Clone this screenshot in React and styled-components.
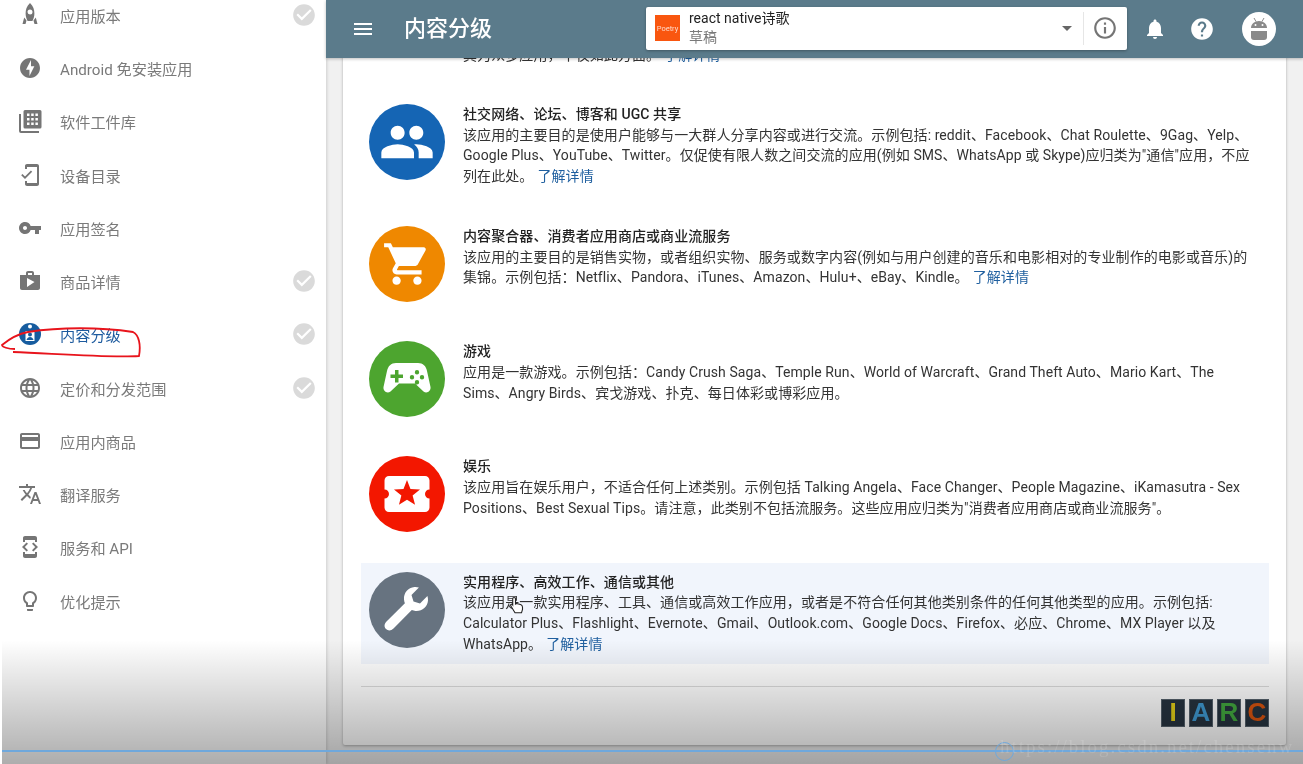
import React from "react";
import styled, { createGlobalStyle } from "styled-components";
import {
  MdOfflineBolt,
  MdVpnKey,
  MdShop,
  MdLanguage,
  MdCreditCard,
  MdTranslate,
  MdDeveloperMode,
  MdLightbulbOutline,
  MdCheckCircle,
  MdMenu,
  MdArrowDropDown,
  MdInfoOutline,
  MdNotifications,
  MdHelp,
  MdPeople,
  MdShoppingCart,
  MdLocalActivity,
  MdMobileFriendly,
} from "react-icons/md";

const GlobalStyle = createGlobalStyle`
  html, body {
    margin: 0;
    padding: 0;
    height: 100%;
    overflow: hidden;
    font-family: Roboto, "Noto Sans CJK SC", sans-serif;
  }
`;

const Page = styled.div`
  position: relative;
  display: flex;
  width: 1303px;
  height: 764px;
  overflow: hidden;
  background: #f1f1f1;
  filter: blur(0.35px);
`;

const Sidebar = styled.nav`
  width: 326px;
  flex: none;
  background: #fff;
  overflow: hidden;
  box-shadow: 1px 0 3px rgba(0, 0, 0, 0.15);
  z-index: 1;
`;

const NavList = styled.div`
  margin-top: -11.8px;
`;

const NavItem = styled.div`
  display: flex;
  align-items: center;
  height: 53.27px;
  padding: 0 9px 0 18px;
  color: ${props => (props.$active ? "#1c5a9e" : "#7a7a7a")};
  font-size: 15.2px;
`;

const NavIcon = styled.span`
  display: flex;
  justify-content: center;
  width: 24px;
  margin-right: 18px;
  font-size: 24px;
  color: ${props => (props.$active ? "#165c9f" : "#757575")};
`;

const NavLabel = styled.span`
  flex: 1;
`;

const Done = styled(MdCheckCircle)`
  font-size: 26px;
  color: #dadada;
`;

const Main = styled.div`
  flex: 1;
  display: flex;
  flex-direction: column;
  min-width: 0;
`;

const TopBar = styled.header`
  position: relative;
  z-index: 2;
  display: flex;
  align-items: center;
  flex: none;
  height: 58px;
  padding: 0 21px 0 25px;
  background: #5b7b8b;
  color: #fff;
  box-shadow: 0 1px 3px rgba(0, 0, 0, 0.25);
`;

const PageTitle = styled.h1`
  width: 242px;
  margin: 0 0 6px 29px;
  font-size: 22px;
  font-weight: 500;
`;

const AppPicker = styled.div`
  display: flex;
  align-items: center;
  flex: none;
  width: 481px;
  height: 43px;
  margin-top: -2px;
  padding: 0 9px 0 9px;
  box-sizing: border-box;
  background: #fff;
  border-radius: 2px;
  box-shadow: 0 1px 3px rgba(0, 0, 0, 0.3);
`;

const AppLogo = styled.div`
  display: flex;
  align-items: center;
  justify-content: center;
  width: 25px;
  height: 26px;
  background: #f9560f;
  color: #ffd9c9;
  font-size: 7.5px;
`;

const AppText = styled.div`
  flex: 1;
  margin-left: 9px;
`;

const AppName = styled.div`
  color: #222;
  font-size: 14px;
  line-height: 19px;
`;

const AppStatus = styled.div`
  color: #7a7a7a;
  font-size: 14px;
  line-height: 19px;
`;

const PickerDivider = styled.div`
  width: 1px;
  height: 33px;
  margin: 0 8px 0 4px;
  background: #e6e6e6;
`;

const BarIcons = styled.div`
  display: flex;
  align-items: center;
  margin-left: 16px;
  gap: 22px;
`;

const Avatar = styled.div`
  display: flex;
  align-items: center;
  justify-content: center;
  flex: none;
  width: 34px;
  height: 34px;
  margin-left: 27px;
  border-radius: 50%;
  background: #fff;
`;

const Scroller = styled.div`
  flex: 1;
  overflow: hidden;
  padding: 0 17px;
`;

const Card = styled.section`
  height: 707px;
  margin-top: -20px;
  padding: 0 17px 0 18px;
  box-sizing: border-box;
  background: #fff;
  border-radius: 2px;
  box-shadow: 0 1px 3px rgba(0, 0, 0, 0.3);
`;

const CutOff = styled.div`
  height: 50px;
  padding: 7px 0 0 102px;
  overflow: hidden;
  color: #333;
  font-size: 14px;
  letter-spacing: 0.08px;
  line-height: 21px;
`;

const Rows = styled.div`
  display: flex;
  flex-direction: column;
  gap: 22.2px;
`;

const Row = styled.article`
  display: flex;
  padding: 9px 19px ${props => (props.$hover ? 10 : 8)}px 8px;
  background: ${props => (props.$hover ? "#f1f5fc" : "transparent")};
`;

const Badge = styled.div`
  display: flex;
  align-items: center;
  justify-content: center;
  flex: none;
  width: 76px;
  height: 76px;
  margin-right: 18px;
  border-radius: 50%;
  background: ${props => props.$color};
  color: #fff;
  font-size: ${props => props.$size || 50}px;
`;

const RowText = styled.div`
  color: #333;
  font-size: 14px;
  letter-spacing: 0.08px;
  line-height: 20.7px;
  white-space: nowrap;
`;

const RowTitle = styled.div`
  color: #222;
  font-weight: 500;
`;

const More = styled.a`
  margin-left: 4px;
  color: #1f5f9f;
`;

const Divider = styled.hr`
  height: 1px;
  margin: 21.5px 0 12px;
  border: 0;
  background: #dcdcdc;
`;

const Ratings = styled.div`
  display: flex;
  justify-content: flex-end;
  gap: 4px;
`;

const RatingTile = styled.div`
  display: flex;
  align-items: center;
  justify-content: center;
  width: 24px;
  height: 28px;
  box-sizing: border-box;
  border: 1px solid #55616b;
  background: #26333f;
  color: ${props => props.$color};
  font-family: "Liberation Sans", sans-serif;
  font-size: 26px;
  font-weight: 700;
`;

const Dim = styled.div`
  position: absolute;
  left: 2px;
  right: 0;
  top: 640px;
  bottom: 0;
  z-index: 3;
  pointer-events: none;
  background: linear-gradient(rgba(0, 0, 0, 0), rgba(0, 0, 0, 0.32));
`;

const ProgressLine = styled.div`
  position: absolute;
  left: 0;
  right: 0;
  top: 110px;
  height: 2px;
  background: #6fa8dc;
`;

const ProgressKnob = styled.div`
  position: absolute;
  left: 993px;
  top: 101.5px;
  width: 19px;
  height: 19px;
  box-sizing: border-box;
  border: 1.5px solid #6fa8dc;
  border-radius: 50%;
`;

const Watermark = styled.div`
  position: absolute;
  left: 998px;
  top: 96px;
  color: rgba(255, 255, 255, 0.14);
  font-family: "Liberation Serif", serif;
  font-size: 19px;
  letter-spacing: 2px;
  white-space: nowrap;
`;

const Scribble = styled.svg`
  position: absolute;
  left: 0;
  top: 320px;
  z-index: 3;
  pointer-events: none;
`;

const Pointer = styled.svg`
  position: absolute;
  left: 509px;
  top: 596px;
  z-index: 3;
  pointer-events: none;
`;

const Rocket = () => (
  <svg width="24" height="24" viewBox="0 0 24 24" fill="currentColor">
    <path d="M12 0C8.6 3 7.6 7 7.6 10.5c0 3 1 5.6 2 7.5h4.8c1-1.9 2-4.5 2-7.5C16.400 7 15.400 3 12 0zm0 6.500a2.500 2.500 0 1 1 0 5 2.500 2.500 0 0 1 0-5z" />
    <path d="M6.200 14.500 4.500 21h3l1-3.500zM17.800 14.500 19.500 21h-3l-1-3.500z" />
  </svg>
);

const Library = () => (
  <svg width="24" height="24" viewBox="0 0 24 24" fill="currentColor">
    <path d="M1 5h2v17h18v2H3a2 2 0 0 1-2-2z" />
    <path d="M7 1h15a1.500 1.500 0 0 1 1.500 1.500V18a1.500 1.500 0 0 1-1.500 1.500H7A1.500 1.500 0 0 1 5.500 18V2.500A1.500 1.500 0 0 1 7 1zm2 3.500v2.500h2.500V4.500zm4.200 0v2.500h2.500V4.500zm4.200 0v2.500h2.500V4.500zM9 9v2.500h2.500V9zm4.200 0v2.500h2.500V9zm4.200 0v2.500h2.500V9zM9 13.500V16h2.500v-2.500zm4.200 0V16h2.500v-2.500zm4.200 0V16h2.500v-2.500z" />
  </svg>
);

const RatingIcon = () => (
  <svg width="24" height="24" viewBox="0 0 24 24">
    <circle cx="12" cy="12" r="11" fill="currentColor" />
    <circle cx="12" cy="4.500" r="2" fill="#fff" />
    <path d="M7.500 9h9v10h-9z" fill="#fff" />
    <circle cx="12" cy="12.500" r="2" fill="currentColor" />
    <path d="M8.500 18c.5-2 2-3 3.500-3s3 1 3.500 3z" fill="currentColor" />
  </svg>
);

const GameIcon = () => (
  <svg width="52" height="52" viewBox="0 0 52 52" fill="currentColor">
    <path
      fillRule="evenodd"
      d="M15 10h22c5 0 8 3 9 8l3.500 16c.6 4-3.500 7-7 4.500L34 30.500H18L9.500 38.500C6 41 1.900 38 2.500 34L6 18c1-5 4-8 9-8zm-1 7v4.500H9.500v3.500H14v4.500h3.500V25H22v-3.500h-4.500V17zm22 0a2.200 2.200 0 1 0 0 4.400 2.200 2.200 0 0 0 0-4.400zm-5 5a2.200 2.200 0 1 0 0 4.400 2.200 2.200 0 0 0 0-4.400zm10 0a2.200 2.200 0 1 0 0 4.400 2.200 2.200 0 0 0 0-4.400zm-5 5a2.200 2.200 0 1 0 0 4.400 2.200 2.200 0 0 0 0-4.400z"
    />
  </svg>
);

const WrenchIcon = () => (
  <svg width="52" height="52" viewBox="0 0 52 52" fill="currentColor">
    <path d="M33.500 3C27 3.500 22.500 9 23 15.500c.1 1.400.4 2.500.9 3.700L5.500 37.500c-2.500 2.500-2.500 5.500-.5 7.500s5 2 7.500-.5l18.300-18.400c1.200.5 2.300.8 3.700.9C41 27.500 46.500 23 47 16.500c.1-1.600-.1-3-.6-4.400l-7.400 7.400-6.500-2-2-6.500 7.400-7.400C36.500 3.100 35.100 2.900 33.500 3z" />
  </svg>
);

const AndroidHead = () => (
  <svg width="22" height="24" viewBox="0 0 22 24">
    <path d="M6 1l2 3.500M16 1l-2 3.500" stroke="#8a8a8a" strokeWidth="1" />
    <path d="M3 11c0-4 3.500-7 8-7s8 3 8 7z" fill="#8a8a8a" />
    <circle cx="7.500" cy="8" r="1" fill="#fff" />
    <circle cx="14.500" cy="8" r="1" fill="#fff" />
    <path d="M3 14h16v6a3 3 0 0 1-3 3H6a3 3 0 0 1-3-3z" fill="#8a8a8a" />
  </svg>
);

const navItems = [
  { label: "应用版本", icon: <Rocket />, done: true },
  { label: "Android 免安装应用", icon: <MdOfflineBolt /> },
  { label: "软件工件库", icon: <Library /> },
  { label: "设备目录", icon: <MdMobileFriendly /> },
  { label: "应用签名", icon: <MdVpnKey /> },
  { label: "商品详情", icon: <MdShop />, done: true },
  { label: "内容分级", icon: <RatingIcon />, done: true, active: true },
  { label: "定价和分发范围", icon: <MdLanguage />, done: true },
  { label: "应用内商品", icon: <MdCreditCard /> },
  { label: "翻译服务", icon: <MdTranslate /> },
  { label: "服务和 API", icon: <MdDeveloperMode /> },
  { label: "优化提示", icon: <MdLightbulbOutline /> },
];

const categories = [
  {
    color: "#1565b4",
    icon: <MdPeople />,
    size: 56,
    title: "社交网络、论坛、博客和 UGC 共享",
    lines: [
      "该应用的主要目的是使用户能够与一大群人分享内容或进行交流。示例包括: reddit、Facebook、Chat Roulette、9Gag、Yelp、",
      "Google Plus、YouTube、Twitter。仅促使有限人数之间交流的应用(例如 SMS、WhatsApp 或 Skype)应归类为\"通信\"应用，不应",
      "列在此处。",
    ],
    more: true,
  },
  {
    color: "#ef8800",
    icon: <MdShoppingCart />,
    size: 50,
    title: "内容聚合器、消费者应用商店或商业流服务",
    lines: [
      "该应用的主要目的是销售实物，或者组织实物、服务或数字内容(例如与用户创建的音乐和电影相对的专业制作的电影或音乐)的",
      "集锦。示例包括：Netflix、Pandora、iTunes、Amazon、Hulu+、eBay、Kindle。",
    ],
    more: true,
  },
  {
    color: "#4da52f",
    icon: <GameIcon />,
    title: "游戏",
    lines: [
      "应用是一款游戏。示例包括：Candy Crush Saga、Temple Run、World of Warcraft、Grand Theft Auto、Mario Kart、The",
      "Sims、Angry Birds、宾戈游戏、扑克、每日体彩或博彩应用。",
    ],
  },
  {
    color: "#f31700",
    icon: <MdLocalActivity />,
    size: 54,
    title: "娱乐",
    lines: [
      "该应用旨在娱乐用户，不适合任何上述类别。示例包括 Talking Angela、Face Changer、People Magazine、iKamasutra - Sex",
      "Positions、Best Sexual Tips。请注意，此类别不包括流服务。这些应用应归类为\"消费者应用商店或商业流服务\"。",
    ],
  },
  {
    color: "#677380",
    icon: <WrenchIcon />,
    hover: true,
    title: "实用程序、高效工作、通信或其他",
    lines: [
      "该应用是一款实用程序、工具、通信或高效工作应用，或者是不符合任何其他类别条件的任何其他类型的应用。示例包括:",
      "Calculator Plus、Flashlight、Evernote、Gmail、Outlook.com、Google Docs、Firefox、必应、Chrome、MX Player 以及",
      "WhatsApp。",
    ],
    more: true,
  },
];

const tiles = [
  { letter: "I", color: "#e3cf18" },
  { letter: "A", color: "#3f9ad2" },
  { letter: "R", color: "#42a83f" },
  { letter: "C", color: "#d9540f" },
];

export default function App() {
  return (
    <Page>
      <GlobalStyle />
      <Sidebar>
        <NavList>
          {navItems.map(item => (
            <NavItem key={item.label} $active={item.active}>
              <NavIcon $active={item.active}>{item.icon}</NavIcon>
              <NavLabel>{item.label}</NavLabel>
              {item.done && <Done />}
            </NavItem>
          ))}
        </NavList>
      </Sidebar>
      <Main>
        <TopBar>
          <MdMenu size={24} />
          <PageTitle>内容分级</PageTitle>
          <AppPicker>
            <AppLogo>Poetry</AppLogo>
            <AppText>
              <AppName>react native诗歌</AppName>
              <AppStatus>草稿</AppStatus>
            </AppText>
            <MdArrowDropDown size={24} color="#666" />
            <PickerDivider />
            <MdInfoOutline size={26} color="#757575" />
          </AppPicker>
          <BarIcons>
            <MdNotifications size={24} />
            <MdHelp size={26} />
          </BarIcons>
          <Avatar>
            <AndroidHead />
          </Avatar>
        </TopBar>
        <Scroller>
          <Card>
            <CutOff>
              其为众多应用，不仅如此方面。<More>了解详情</More>
            </CutOff>
            <Rows>
              {categories.map(cat => (
                <Row key={cat.title} $hover={cat.hover}>
                  <Badge $color={cat.color} $size={cat.size}>
                    {cat.icon}
                  </Badge>
                  <RowText>
                    <RowTitle>{cat.title}</RowTitle>
                    {cat.lines.map((line, i) => (
                      <div key={i}>
                        {line}
                        {cat.more && i === cat.lines.length - 1 && <More>了解详情</More>}
                      </div>
                    ))}
                  </RowText>
                </Row>
              ))}
            </Rows>
            <Divider />
            <Ratings>
              {tiles.map(t => (
                <RatingTile key={t.letter} $color={t.color}>
                  {t.letter}
                </RatingTile>
              ))}
            </Ratings>
          </Card>
        </Scroller>
      </Main>
      <Scribble width="150" height="50" viewBox="0 320 150 50">
        <path
          d="M15 349 C8 349 2 347 2 345 C8 340 18 334 28 332 C60 327 100 327 133 332 C139 335 141 345 139 356 C110 358 60 354 13 352"
          fill="none"
          stroke="#e8141c"
          strokeWidth="1.8"
        />
      </Scribble>
      <Pointer width="17" height="19" viewBox="0 0 17 19">
        <path
          d="M5 1.500c1 0 1.500.7 1.500 1.500v5l1-.5 1 .2 1 .3 1 .3 1.500.5c1 .5 1.500 1 1.500 2.500v2l-1 3.500H6L2.500 11 1.500 9c.5-1 1.500-1 2-.3l.2.3V3c0-1 .5-1.500 1.300-1.500z"
          fill="#fff"
          stroke="#222"
          strokeWidth="1.100"
        />
      </Pointer>
      <Dim>
        <ProgressLine />
        <ProgressKnob />
        <Watermark>https://blog.csdn.net/chensenw</Watermark>
      </Dim>
    </Page>
  );
}
